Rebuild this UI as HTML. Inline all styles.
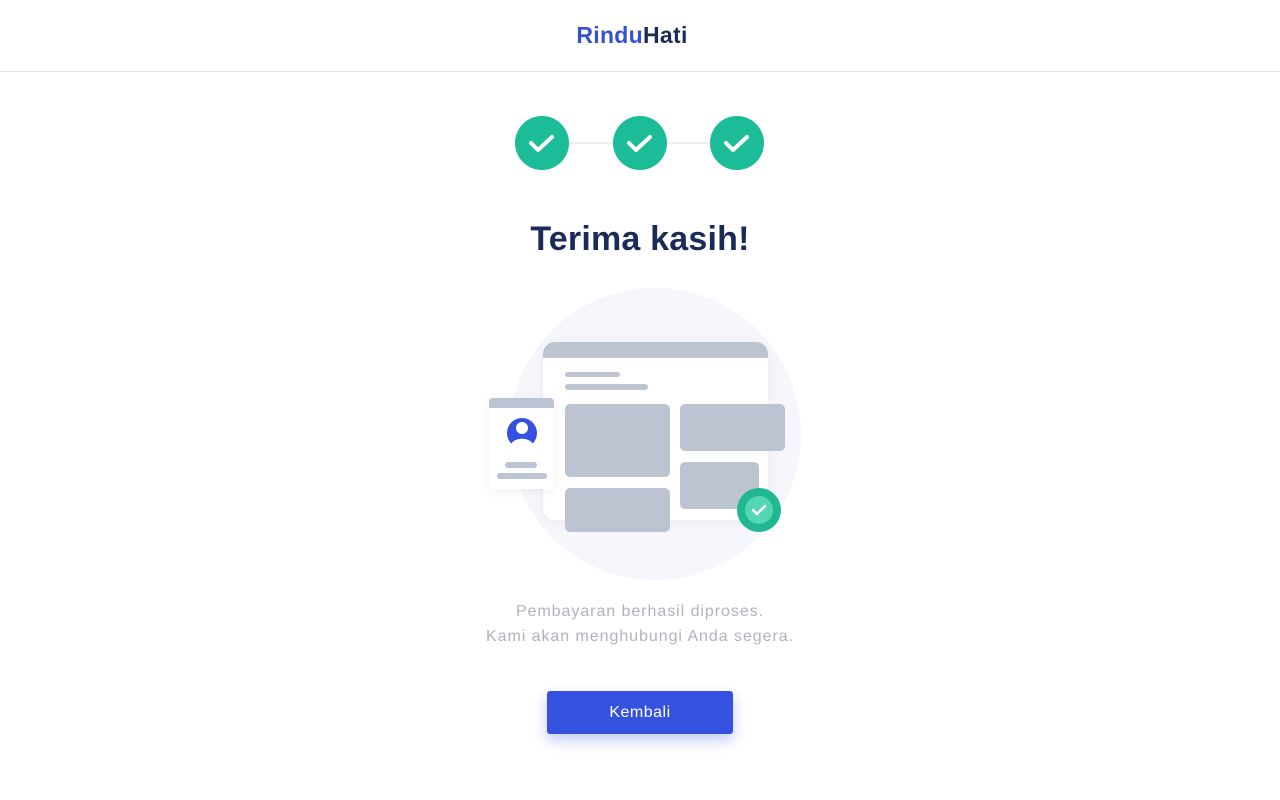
<!DOCTYPE html><html><head><style>
body{margin:0;width:1280px;height:800px;background:#fff;font-family:"Liberation Sans",sans-serif;position:relative;overflow:hidden}
.hdr{position:absolute;left:0;top:0;width:1280px;height:71px;border-bottom:1px solid #e3e4e8}
.logo{position:absolute;left:-8px;width:1280px;top:22px;text-align:center;font-size:23px;font-weight:600;color:#1c2a55;letter-spacing:0.3px}
.logo span{color:#3451d1}
h1{position:absolute;left:0;width:1280px;top:220px;margin:0;text-align:center;font-size:34px;font-weight:700;color:#1a2b5a;letter-spacing:0.2px}
.p{position:absolute;left:0;width:1280px;text-align:center;font-size:16px;color:#b0b3bb;letter-spacing:0.95px}
.btn{position:absolute;left:547px;top:691px;width:186px;height:43px;background:#3451e0;border-radius:3px;color:#fff;font-size:16px;text-align:center;line-height:43px;box-shadow:0 6px 14px rgba(52,81,224,.3);letter-spacing:0.5px}
</style></head><body>
<div class="hdr"><div class="logo"><span>Rindu</span>Hati</div></div>
<svg width="1280" height="800" style="position:absolute;left:0;top:0">
<line x1="542" y1="143" x2="737" y2="143" stroke="#eeeeee" stroke-width="2"/>
<g fill="#1dbc98"><circle cx="542" cy="143" r="27"/><circle cx="640" cy="143" r="27"/><circle cx="737" cy="143" r="27"/></g>
<g fill="none" stroke="#fff" stroke-width="4" stroke-linecap="round" stroke-linejoin="round">
<path d="M531 143l7 7 14-13"/><path d="M629 143l7 7 14-13"/><path d="M726 143l7 7 14-13"/></g>
<circle cx="655" cy="434" r="146" fill="#f6f7fc"/>
<rect x="543" y="342" width="225" height="178" rx="12" fill="#fff" style="filter:drop-shadow(0 2px 6px rgba(0,0,0,.05))"/>
<path d="M555 342h201a12 12 0 0 1 12 12v4h-225v-4a12 12 0 0 1 12-12z" fill="#bcc4d1"/>
<g fill="#bcc4d1">
<rect x="565" y="372" width="55" height="5" rx="2.5"/><rect x="565" y="384" width="83" height="6" rx="3"/>
<rect x="565" y="404" width="105" height="73" rx="5"/><rect x="680" y="404" width="105" height="47" rx="5"/>
<rect x="680" y="462" width="79" height="47" rx="5"/><rect x="565" y="488" width="105" height="44" rx="5"/>
</g>
<rect x="489" y="398" width="65" height="91" rx="4" fill="#fff" style="filter:drop-shadow(0 2px 5px rgba(0,0,0,.06))"/>
<path d="M493 398h57a4 4 0 0 1 4 4v6h-65v-6a4 4 0 0 1 4-4z" fill="#bcc4d1"/>
<circle cx="522" cy="433" r="15" fill="#3451e0"/>
<circle cx="522" cy="428" r="6" fill="#fff"/>
<path d="M511 444a12 9 0 0 1 22 0a15 15 0 0 1-22 0z" fill="#fff"/>
<rect x="505" y="462" width="32" height="6" rx="3" fill="#bcc4d1"/><rect x="497" y="473" width="50" height="6" rx="3" fill="#bcc4d1"/>
<circle cx="759" cy="510" r="22" fill="#1fb893"/><circle cx="759" cy="510" r="14" fill="#52d6b3"/>
<path d="M753 510l4 4 8-8" fill="none" stroke="#fff" stroke-width="2.5" stroke-linecap="round" stroke-linejoin="round"/>
</svg>
<h1>Terima kasih!</h1>
<div class="p" style="top:603px">Pembayaran berhasil diproses.</div>
<div class="p" style="top:628px">Kami akan menghubungi Anda segera.</div>
<div class="btn">Kembali</div>
</body></html>
